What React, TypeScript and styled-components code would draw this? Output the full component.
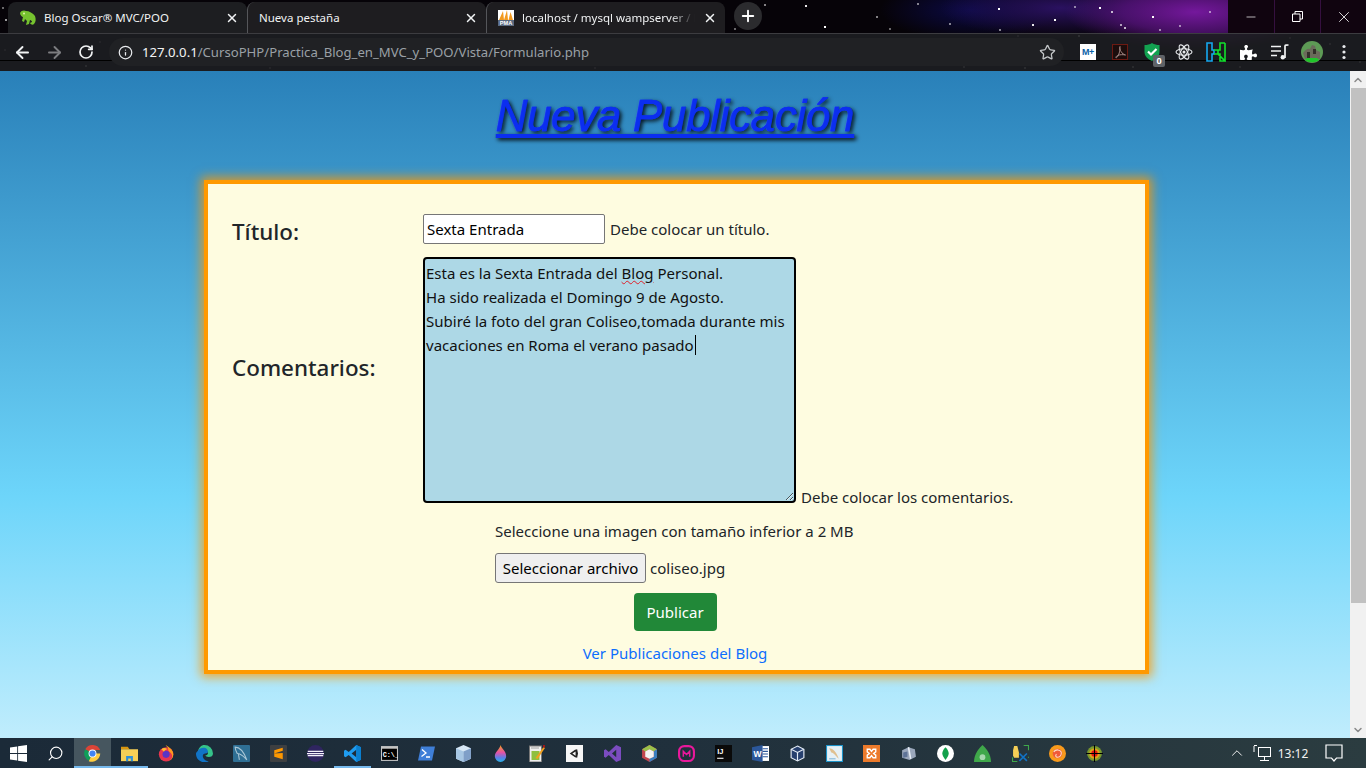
import React from 'react';
import styled, { createGlobalStyle } from 'styled-components';
import { ArrowLeft, ArrowRight, RotateCw, Info, Star, X, Plus, Minus, Search, ChevronUp, ChevronDown } from 'lucide-react';
import { FaPuzzlePiece } from 'react-icons/fa';

const GlobalStyle = createGlobalStyle`
  html, body { margin: 0; padding: 0; height: 100%; overflow: hidden; background: #111; }
  * { box-sizing: border-box; }
`;

const UI_FONT = `"Noto Sans", "Open Sans", "Liberation Sans", sans-serif`;

const STAR_LIST: [number, number, number][] = [
  [806, 6, 0.9], [825, 27, 1], [999, 9, 1], [1100, 8, 1], [1153, 17, 1], [1055, 20, 1], [1033, 25, 0.9], [1112, 12, 0.7],
  [1121, 25, 0.6], [1125, 28, 0.7], [918, 4, 0.5], [877, 17, 0.5], [765, 5, 0.5], [890, 29, 0.4], [950, 24, 0.5], [1075, 7, 0.5],
  [1180, 26, 0.5], [1210, 12, 0.5], [735, 29, 0.4], [1000, 30, 0.5], [1160, 30, 0.5], [6, 20, 0.6], [3, 8, 0.4],
  [1079, 36, 0.6], [1093, 45, 0.4], [1025, 68, 0.5], [1018, 36, 0.3], [1330, 44, 0.4], [1360, 62, 0.4], [86, 66, 0.5], [270, 68, 0.3],
  [595, 68, 0.3], [964, 67, 0.4], [1133, 67, 0.5], [1240, 67, 0.4], [5, 50, 0.3], [100, 42, 0.3], [1290, 38, 0.3],
];

const STARS = STAR_LIST.map(
  ([x, y, a]) => `radial-gradient(circle 1.4px at ${x}px ${y}px, rgba(255,255,255,${a}) 60%, transparent 100%)`
).join(', ');

const BrowserTop = styled.header`
  height: 71px;
  background:
    ${STARS},
    radial-gradient(ellipse 130px 38px at 1195px 12px, #74189c 0%, rgba(95, 20, 135, 0.7) 55%, transparent 100%),
    radial-gradient(ellipse 120px 30px at 1060px 8px, #2a1160 0%, transparent 100%),
    radial-gradient(ellipse 90px 30px at 970px 10px, #0b0a45 0%, transparent 100%),
    linear-gradient(#060308, #060308);
  background-size: 100% 100%;
`;

const TabStrip = styled.div`
  height: 33px;
  display: flex;
  align-items: flex-end;
  padding-left: 8px;
  position: relative;
`;

const Tab = styled.div<{ $active?: boolean }>`
  width: 239px;
  height: 31px;
  display: flex;
  align-items: center;
  gap: 8px;
  padding: 0 8px 0 12px;
  border-radius: 8px 8px 0 0;
  background: ${({ $active }) => ($active ? '#1d1e21' : 'rgba(40, 40, 42, 0.72)')};
  color: #f1f3f4;
  font: 11.5px ${UI_FONT};
  position: relative;
  & + & {
    border-left: 1px solid #55565a;
    padding-left: 11px;
  }
`;

const TabTitle = styled.span<{ $fade?: boolean }>`
  flex: 1;
  min-width: 0;
  white-space: nowrap;
  ${({ $fade }) => $fade && 'mask-image: linear-gradient(to right, #000 85%, transparent 100%);'}
`;

const NewTab = styled.button`
  width: 28px;
  height: 28px;
  margin: 0 0 2px 9px;
  align-self: center;
  border: 0;
  border-radius: 50%;
  background: #2b2b2e;
  color: #fff;
  display: flex;
  align-items: center;
  justify-content: center;
  padding: 0;
`;

const WinControls = styled.div`
  margin-left: auto;
  align-self: flex-start;
  height: 33px;
  display: flex;
  background: #10040f;
`;

const WinButton = styled.div`
  width: 46px;
  height: 33px;
  display: flex;
  align-items: center;
  justify-content: center;
  color: #fff;
  & + & { border-left: 1px solid #35103f; }
`;

const Toolbar = styled.nav`
  height: 38px;
  border-top: 1px solid #3c3c40;
  display: flex;
  align-items: flex-start;
  padding: 4px 0 0 6px;
  background: linear-gradient(to bottom, transparent 26px, #000 26px, #000 27px, transparent 27px), rgba(30, 31, 34, 0.88);
`;

const NavButton = styled.div<{ $dim?: boolean }>`
  width: 32px;
  height: 28px;
  display: flex;
  align-items: center;
  justify-content: center;
  color: ${({ $dim }) => ($dim ? '#7c7d80' : '#f1f3f4')};
`;

const Omnibox = styled.div`
  width: 955px;
  height: 28px;
  margin-left: 7px;
  border-radius: 14px;
  background: #202124;
  display: flex;
  align-items: center;
  padding: 0 8px 0 9px;
  color: #e8eaed;
`;

const Url = styled.span`
  margin-left: 9px;
  font: 13.15px ${UI_FONT};
  color: #9aa0a6;
  white-space: nowrap;
  flex: 1;
`;

const UrlHost = styled.span`
  color: #f1f3f4;
`;

const Extensions = styled.div`
  display: flex;
  margin-left: 8px;
`;

const ExtSlot = styled.div`
  width: 32px;
  height: 28px;
  display: flex;
  align-items: center;
  justify-content: center;
  position: relative;
  color: #fff;
`;

const Badge = styled.span`
  position: absolute;
  right: 3px;
  bottom: -1px;
  width: 12px;
  height: 12px;
  border-radius: 2px;
  background: #5f6368;
  color: #fff;
  font: bold 9px/12px ${UI_FONT};
  text-align: center;
`;

const MovistarMark = styled.span`
  width: 16px;
  height: 16px;
  background: #fff;
  color: #0b5fa8;
  font: 900 9px/16px "Liberation Sans", sans-serif;
  text-align: center;
  letter-spacing: -0.5px;
`;

const Page = styled.div`
  height: 667px;
  display: flex;
  overflow: hidden;
`;

const Content = styled.main`
  flex: 1;
  min-width: 0;
  background: linear-gradient(#2980b9, #6dd5fa, #ffffff);
  background-size: 100% 850px;
  background-repeat: no-repeat;
  padding-top: 19px;
`;

const Heading = styled.h1`
  margin: 0;
  text-align: center;
  height: 90px;
  font: italic 400 44px/52px "Liberation Sans", Arial, sans-serif;
  letter-spacing: -0.35px;
  color: #0b2ef0;
  -webkit-text-stroke: 0.6px #0b2ef0;
  text-decoration: underline;
  text-shadow: 2px 2px 4px #000;
`;

const Card = styled.section`
  width: 945px;
  margin-left: 204px;
  height: 494px;
  border: 4px solid #ff9900;
  background: #fefce0;
  box-shadow: 0 0 10px 3px rgba(255, 153, 0, 0.8);
  padding: 30px 27px 0 24px;
  font: 15.03px/24px ${UI_FONT};
  color: #212529;
`;

const FormGrid = styled.form`
  display: grid;
  grid-template-columns: 191px 1fr;
  row-gap: 13px;
`;

const FieldLabel = styled.label<{ $top: number }>`
  font-size: 22.4px;
  font-weight: 500;
  line-height: 30px;
  height: 30px;
  overflow: visible;
  transform: translateY(${({ $top }) => $top}px);
`;

const Field = styled.div<{ $end?: boolean }>`
  display: flex;
  align-items: ${({ $end }) => ($end ? 'flex-end' : 'center')};
  gap: 5px;
`;

const TextInput = styled.input`
  width: 182px;
  height: 30px;
  padding: 1px 3px;
  border: 1px solid #767676;
  border-radius: 2px;
  background: #fff;
  color: #000;
  font: 15.03px ${UI_FONT};
`;

const Comments = styled.div`
  width: 373px;
  height: 246px;
  padding: 2px 1px;
  border: 2px solid #000;
  border-radius: 4px;
  background: #add8e6;
  color: #111;
  resize: both;
  overflow: hidden;
`;

const Misspelled = styled.span`
  text-decoration: underline wavy #e0202a 1px;
`;

const Caret = styled.span`
  border-left: 1px solid #000;
  margin-left: 1px;
`;

const HintBottom = styled.span`
  line-height: 20px;
  margin-bottom: -4px;
`;

const UploadBlock = styled.div`
  padding-left: 263px;
  margin-top: 16px;
`;

const UploadRow = styled.div`
  display: flex;
  align-items: center;
  gap: 4px;
  margin-top: 10px;
`;

const FileButton = styled.button`
  width: 151px;
  height: 30px;
  padding: 0;
  border: 1px solid #767676;
  border-radius: 3px;
  background: #efefef;
  color: #000;
  font: 15.03px ${UI_FONT};
`;

const SubmitButton = styled.button`
  display: block;
  width: 83px;
  height: 38px;
  margin: 10px auto 0;
  border: 0;
  border-radius: 4px;
  background: #218838;
  color: #fff;
  font: 15.03px ${UI_FONT};
`;

const BackLink = styled.a`
  display: block;
  margin-top: 10px;
  text-align: center;
  color: #0d6efd;
  text-decoration: none;
`;

const Scrollbar = styled.aside`
  width: 16px;
  background: #f1f1f1;
  display: flex;
  flex-direction: column;
  align-items: center;
  color: #8a8a8a;
`;

const ScrollArrow = styled.div`
  height: 17px;
  display: flex;
  align-items: center;
  justify-content: center;
`;

const ScrollThumb = styled.div`
  width: 15px;
  height: 515px;
  background: #c1c1c1;
`;

const ScrollTrack = styled.div`
  flex: 1;
`;

const Taskbar = styled.footer`
  height: 30px;
  display: flex;
  background: linear-gradient(to right, #1b2a38, #20303c 50%, #2b3c40);
  color: #fff;
`;

const TaskItem = styled.div<{ $active?: boolean; $open?: boolean }>`
  width: 37.1px;
  height: 30px;
  flex: none;
  display: flex;
  align-items: center;
  justify-content: center;
  background: ${({ $active }) => ($active ? '#46565f' : 'transparent')};
  box-shadow: ${({ $open }) => ($open ? 'inset 0 -2px 0 #76b9ed' : 'none')};
  & > svg {
    width: 17px;
    height: 17px;
  }
`;

const Tray = styled.div`
  margin-left: auto;
  margin-right: 10px;
  display: flex;
  align-items: center;
  height: 30px;
`;

const TraySlot = styled.div<{ $w: number }>`
  width: ${({ $w }) => $w}px;
  display: flex;
  align-items: center;
  justify-content: center;
  font: 12px ${UI_FONT};
  color: #f2f2f2;
`;

/* ---------- drawings ---------- */

const Chameleon = () => (
  <svg width="16" height="16" viewBox="0 0 16 16">
    <path d="M0 3c1-3 5-3 6-2 3 0 7 2 9 5 1 3 1 6-1 8-1 1-3 1-4-1l2-1c0-1-1-2-2-2l-1 4-3 1 1-4-2-2-1 3-2-1 1-4C2 7 0 5 0 3z" fill="#76c32f" />
    <circle cx="4" cy="3.500" r="1" fill="#e2f5a8" />
  </svg>
);

const PmaIcon = () => (
  <svg width="16" height="16" viewBox="0 0 16 16">
    <rect width="16" height="16" fill="#fff" />
    <path d="M1 10 5 1l1 9zM6 10l3-10 1 10zM10.500 10l2-8 2.500 8z" fill="#f39a1f" />
    <rect y="10" width="16" height="6" fill="#5a6a80" />
    <text x="8" y="15.400" textAnchor="middle" fontSize="5.600" fontWeight="700" fontFamily="Liberation Sans" fill="#fff">PMA</text>
  </svg>
);

const PdfIcon = () => (
  <svg width="16" height="16" viewBox="0 0 16 16">
    <rect x=".5" y=".5" width="15" height="15" fill="#1c0d0c" stroke="#6c1a12" />
    <path d="M8 2.500c-1 1 .5 4 1 5 1 2 3 3 4.500 3.500-2-.5-6-.5-8 .5-1.500 1-2 2-1.500 2.300 1 .2 3-3 3.500-6 .3-2 .5-4.500.5-5.300z" fill="none" stroke="#a58a86" strokeWidth="1" />
  </svg>
);

const ShieldIcon = () => (
  <svg width="18" height="20" viewBox="0 0 18 20">
    <path d="M9 1c2 1.500 5 2 7.500 2v7c0 4-3.500 7.500-7.500 9-4-1.500-7.500-5-7.500-9V3C4 3 7 2.500 9 1z" fill="#12a150" />
    <path d="m5 9.500 3 3 5.500-5.500" fill="none" stroke="#fff" strokeWidth="2.200" />
  </svg>
);

const AtomIcon = () => (
  <svg width="18" height="18" viewBox="0 0 18 18" fill="none" stroke="#e8eaed" strokeWidth="1.100">
    <ellipse cx="9" cy="9" rx="8" ry="3.200" />
    <ellipse cx="9" cy="9" rx="8" ry="3.200" transform="rotate(60 9 9)" />
    <ellipse cx="9" cy="9" rx="8" ry="3.200" transform="rotate(120 9 9)" />
    <circle cx="9" cy="9" r="1.500" fill="#e8eaed" stroke="none" />
  </svg>
);

const NeonH = () => (
  <svg width="20" height="20" viewBox="0 0 20 20" fill="none" strokeWidth="1.600">
    <path d="M1 1h5v7h2v4H6v7H1z" stroke="#14a8f0" />
    <path d="M19 1h-5v7h-2M12 12h2v7h5zM19 1v18M8 8h4v4H8" stroke="#12e02c" />
  </svg>
);

const QueueIcon = () => (
  <svg width="18" height="16" viewBox="0 0 18 16" fill="none" stroke="#f1f3f4" strokeWidth="1.700">
    <path d="M0 2.500h10M0 7h10M0 11.500h6" />
    <path d="M14 14V2c0-1 1.500-1 3.500-1" />
    <circle cx="11.800" cy="13.200" r="2.200" fill="#f1f3f4" stroke="none" />
  </svg>
);

const AvatarIcon = () => (
  <svg width="22" height="22" viewBox="0 0 22 22">
    <circle cx="11" cy="11" r="11" fill="#5d9a55" />
    <path d="M2 12c3-4 5-5 7-4l2-4 3 1 1 4 4 2v7H4z" fill="#6a6b5a" />
    <path d="M6 11h3v6H6zm6-3h3v5h-3z" fill="#33302a" />
    <path d="M4 19c4 3 10 3 14 0l-2-2H6z" fill="#1fc72a" />
  </svg>
);

const MoreDots = () => (
  <svg width="4" height="16" viewBox="0 0 4 16" fill="#e8eaed">
    <circle cx="2" cy="2.500" r="1.600" />
    <circle cx="2" cy="8" r="1.600" />
    <circle cx="2" cy="13.500" r="1.600" />
  </svg>
);

const WinLogo = () => (
  <svg viewBox="0 0 16 16" fill="#fff">
    <path d="M0 2.300 6.800 1.400v6.200H0zM7.600 1.200 16 0v7.600H7.600zM0 8.400h6.800v6.200L0 13.700zM7.600 8.400H16V16l-8.400-1.200z" />
  </svg>
);

const ChromeLogo = () => (
  <svg viewBox="0 0 16 16">
    <path d="M8 8 1.100 4A8 8 0 0 1 15.300 4.700H8z" fill="#db4437" />
    <path d="M8 8 4.500 14.900 A8 8 0 0 1 1.100 4z" fill="#0f9d58" />
    <path d="M8 8h7.300A8 8 0 0 1 4.500 15.200z" fill="#ffcd40" />
    <circle cx="8" cy="8" r="3.700" fill="#fff" />
    <circle cx="8" cy="8" r="2.900" fill="#4285f4" />
  </svg>
);

const FolderIcon = () => (
  <svg viewBox="0 0 20 18">
    <path d="M0 1h8l2 3H0z" fill="#d9960f" />
    <rect y="4" width="20" height="14" fill="#f6cf56" />
    <path d="M6 18v-6h8v6h-2.500v-3h-3v3z" fill="#2d8fd8" />
  </svg>
);

const FirefoxIcon = () => (
  <svg viewBox="0 0 20 20">
    <circle cx="9.500" cy="11" r="8.500" fill="#e8354f" />
    <path d="M9 0c5 3 9 6 9 11s-4 8.500-8 8.500c5-1 7-4 6.500-7.500C16 9 12 8 12 5c0-2-2-3-3-5z" fill="#ff9a1e" />
    <circle cx="9.500" cy="11" r="4.200" fill="#5a35c4" />
    <path d="M4 5c2-2 5-2 7 0-2 0-3 1-4 3z" fill="#ffbb2e" />
  </svg>
);

const EdgeIcon = () => (
  <svg viewBox="0 0 20 20">
    <path d="M10 0a10 10 0 0 1 10 10c0 3-2 4-5 4-2 0-4-1-4-2 3 0 4-2 2-5-3-3-8-2-11 2C3 3 6 0 10 0z" fill="#35c38a" />
    <path d="M2 7c3-4 8-5 11-2 2 3 1 5-2 5-2 0-3 1-3 3 0 3 3 6 7 6a10 10 0 0 1-15-9c0-1 1-2 2-3z" fill="#1173c6" />
  </svg>
);

const MysqlBench = () => (
  <svg viewBox="0 0 16 16">
    <rect width="16" height="16" rx="1" fill="#2f6f94" />
    <path d="M2 2c4 0 8 4 11 12-3-3-5-6-9-6-1-2-2-4-2-6zM5 8l1 6" fill="none" stroke="#a9c6d6" strokeWidth="1" />
  </svg>
);

const SublimeIcon = () => (
  <svg viewBox="0 0 16 16">
    <rect width="16" height="16" rx="1" fill="#3d3f41" />
    <path d="M12 2.500v3L4 8V5zM4 8l8 2.500v3L4 11zM4 8l8-.5v3z" fill="#ff9800" />
  </svg>
);

const EclipseIcon = () => (
  <svg viewBox="0 0 16 16">
    <circle cx="8" cy="8" r="8" fill="#2f2560" />
    <path d="M.7 5.500h14.600v1.100H.7zM0 7.500h16v1.100H0zM.7 9.500h14.600v1.100H.7z" fill="#f2f0fa" />
  </svg>
);

const VsCodeIcon = () => (
  <svg viewBox="0 0 18 18">
    <path d="M13 0 18 2.400v13.200L13 18 5 10.500 1.700 13 0 12V6l1.700-1L5 7.500zM13 5 8 9l5 4z" fill="#1f9cf0" fillRule="evenodd" />
    <path d="M13 0 18 2.400v13.200L13 18z" fill="#0a7fd0" />
  </svg>
);

const CmdIcon = () => (
  <svg viewBox="0 0 16 14">
    <rect width="16" height="14" fill="#c4c4c4" />
    <rect x="1" y="2.500" width="14" height="10.500" fill="#000" />
    <text x="1.600" y="10" fontSize="6.400" fontWeight="700" fontFamily="Liberation Mono" fill="#fff">C:\_</text>
  </svg>
);

const PowerShellIcon = () => (
  <svg viewBox="0 0 17 14">
    <path d="M3 0h14l-3 14H0z" fill="#3f7fd8" />
    <path d="m4 3 4 3.500L3.500 10M8 10.500h4" fill="none" stroke="#fff" strokeWidth="1.300" />
  </svg>
);

const BoxIcon = () => (
  <svg viewBox="0 0 14 16">
    <path d="M7 0l7 3v10l-7 3-7-3V3z" fill="#d6e7f5" />
    <path d="M7 6v10l-7-3V3z" fill="#a7c7e4" />
    <path d="M7 6v10l7-3V3z" fill="#7f9fc8" />
  </svg>
);

const DropIcon = () => (
  <svg viewBox="0 0 12 18">
    <defs>
      <linearGradient id="dropFill" x1="0" y1="0" x2="0" y2="1">
        <stop offset="0" stopColor="#f6a21c" />
        <stop offset=".45" stopColor="#e351a8" />
        <stop offset=".75" stopColor="#5b7fe8" />
        <stop offset="1" stopColor="#27b4e6" />
      </linearGradient>
    </defs>
    <path d="M6 0c1 4 6 6 6 12a6 6 0 0 1-12 0C0 7 5 5 6 0z" fill="url(#dropFill)" />
  </svg>
);

const NotepadIcon = () => (
  <svg viewBox="0 0 16 17">
    <rect y="1" width="12" height="16" fill="#eee" stroke="#777" />
    <rect x="2" y="6" width="8" height="9" fill="#8fbf3f" />
    <path d="M2 3h8" stroke="#555" strokeDasharray="1 1" />
    <path d="M6 13 14 2l1.500 1L8 14z" fill="#f0a020" />
    <rect x="13.500" y="0" width="2" height="2.500" fill="#a01818" />
  </svg>
);

const UnityIcon = () => (
  <svg viewBox="0 0 16 16">
    <rect width="16" height="16" fill="#f6f6f6" />
    <path d="m3.500 8 5-3.500L10.500 4l.8 4-.8 4-2-.5zM6 8l3 2V6z" fill="#222" fillRule="evenodd" />
  </svg>
);

const VsIcon = () => (
  <svg viewBox="0 0 16 16">
    <path d="M11.500 0 16 2v12l-4.500 2L4.500 9.500 1.500 12 0 11V5l1.500-1 3 2.500zM11.500 4.500 7.500 8l4 3.500z" fill="#7b4cc0" fillRule="evenodd" />
  </svg>
);

const CubeIcon = () => (
  <svg viewBox="0 0 14 16">
    <path d="M7 0l7 4v8l-7 4-7-4V4z" fill="#c2464e" />
    <path d="M7 0l7 4-3 2-4-2-4 2-3-2z" fill="#9ac24a" />
    <path d="M14 4v8l-7 4v-3l4-2V6z" fill="#3a7fc0" />
    <path d="M7 4l4 2v5l-4 2-4-2V6z" fill="#f3f3f3" />
  </svg>
);

const PinkIcon = () => (
  <svg viewBox="0 0 16 16" fill="none" stroke="#e9189b" strokeWidth="2">
    <rect x="1" y="1" width="14" height="14" rx="5" />
    <path d="M5 11V6l3 3 3-3v5" strokeWidth="1.400" />
  </svg>
);

const IdeaIcon = () => (
  <svg viewBox="0 0 16 16">
    <rect width="16" height="16" fill="#0a0a0a" />
    <text x="2" y="8.500" fontSize="7" fontWeight="700" fontFamily="Liberation Sans" fill="#fff">IJ</text>
    <rect x="2" y="12" width="6" height="1" fill="#fff" />
  </svg>
);

const WordIcon = () => (
  <svg viewBox="0 0 16 16">
    <rect x="6" y="1" width="10" height="14" fill="#fff" />
    <path d="M10 3.500h5M10 6h5M10 8.500h5M10 11h5" stroke="#2b579a" />
    <path d="M0 2 10 0v16L0 14z" fill="#2b579a" />
    <text x="1.400" y="11" fontSize="8" fontWeight="700" fontFamily="Liberation Sans" fill="#fff">W</text>
  </svg>
);

const VBoxIcon = () => (
  <svg viewBox="0 0 14 16" fill="#27406e" stroke="#e4ecf6" strokeWidth="1.100">
    <path d="M7 1l6 3v8l-6 3-6-3V4z" />
    <path d="M1 4l6 3 6-3M7 7v8" fill="none" />
  </svg>
);

const WorkbenchDoc = () => (
  <svg viewBox="0 0 16 16">
    <rect x=".5" y=".5" width="15" height="15" fill="#e7f1f6" stroke="#1c93c9" />
    <path d="M3 3c4 0 7 4 9 10-3-3-5-6-7-6z" fill="#e0c090" />
    <path d="M3 13h6" stroke="#7fb6d8" />
  </svg>
);

const XamppIcon = () => (
  <svg viewBox="0 0 16 16">
    <rect width="16" height="16" fill="#ec7a2b" />
    <path d="M4 4h2.500L8 6l1.500-2H12v2.500L10 8l2 1.500V12H9.500L8 10l-1.500 2H4V9.500L6 8 4 6.500z" fill="none" stroke="#fff" strokeWidth="1.300" />
  </svg>
);

const AzureIcon = () => (
  <svg viewBox="0 0 16 14">
    <path d="M2 4l6-3 6 2 1 7-6 3-7-2z" fill="#9aa7bb" />
    <path d="M8 1l2 11" stroke="#e8eef5" strokeWidth="1.500" />
    <path d="M3 6l4-1v5l-4 1z" fill="#5e7396" />
  </svg>
);

const MongoIcon = () => (
  <svg viewBox="0 0 16 16">
    <circle cx="8" cy="8" r="8" fill="#fff" />
    <path d="M8 2c2 2 3 4 3 6s-1.500 4-3 6c-1.500-2-3-4-3-6s1-4 3-6z" fill="#12a14b" />
  </svg>
);

const GreenHouse = () => (
  <svg viewBox="0 0 16 16">
    <path d="M8 0c3 3 8 8 8 16H0C0 8 5 3 8 0z" fill="#3fa84a" />
    <circle cx="8" cy="11.500" r="2.700" fill="#a7d8ae" />
  </svg>
);

const ToolsIcon = () => (
  <svg viewBox="0 0 16 16">
    <path d="M1 10V5l1-4h3l1.500 6V12H2z" fill="#f6cf56" />
    <path d="M11 .5h4.500V5M.5 11.500v4H5M15.500 11v1" fill="none" stroke="#3fa84a" />
    <path d="m7 8 7 7M14 8l-7 7" stroke="#1173c6" strokeWidth="1.500" />
  </svg>
);

const OrangeBall = () => (
  <svg viewBox="0 0 16 16">
    <circle cx="8" cy="8" r="8" fill="#f89a1c" />
    <circle cx="8" cy="8" r="4.500" fill="#f05a3a" />
    <path d="M4.500 6.500c2-3 6-2 7 0 .5 3-1 5-3.500 5-2 0-2-2-1-3" fill="none" stroke="#fde2c8" />
  </svg>
);

const TargetIcon = () => (
  <svg viewBox="0 0 16 16">
    <circle cx="8" cy="8" r="7" fill="#7a9a2c" />
    <circle cx="8" cy="8" r="5" fill="#e0a016" />
    <circle cx="8" cy="8" r="3" fill="#e01414" />
    <path d="M8 0v16M0 8h16" stroke="#000" />
  </svg>
);

const NetworkIcon = () => (
  <svg width="18" height="16" viewBox="0 0 18 16" fill="none" stroke="#fff">
    <rect x="5.500" y="2.500" width="12" height="9" />
    <path d="M1 1v6M1 .5h3M11.500 11.500V15M7 15.500h9" />
  </svg>
);

const NotifyIcon = () => (
  <svg width="18" height="18" viewBox="0 0 18 18" fill="none" stroke="#fff" strokeWidth="1.200">
    <path d="M1 1h16v13h-5.500L9 17l-2.500-3H1z" />
  </svg>
);

const TASK_ICONS: { icon: React.ReactNode; active?: boolean; open?: boolean }[] = [
  { icon: <WinLogo /> },
  { icon: <Search strokeWidth={1.6} style={{ transform: 'scaleX(-1)' }} /> },
  { icon: <ChromeLogo />, active: true, open: true },
  { icon: <FolderIcon />, open: true },
  { icon: <FirefoxIcon /> },
  { icon: <EdgeIcon /> },
  { icon: <MysqlBench /> },
  { icon: <SublimeIcon /> },
  { icon: <EclipseIcon /> },
  { icon: <VsCodeIcon />, open: true },
  { icon: <CmdIcon /> },
  { icon: <PowerShellIcon /> },
  { icon: <BoxIcon /> },
  { icon: <DropIcon /> },
  { icon: <NotepadIcon /> },
  { icon: <UnityIcon /> },
  { icon: <VsIcon /> },
  { icon: <CubeIcon /> },
  { icon: <PinkIcon /> },
  { icon: <IdeaIcon /> },
  { icon: <WordIcon /> },
  { icon: <VBoxIcon /> },
  { icon: <WorkbenchDoc /> },
  { icon: <XamppIcon /> },
  { icon: <AzureIcon /> },
  { icon: <MongoIcon /> },
  { icon: <GreenHouse /> },
  { icon: <ToolsIcon /> },
  { icon: <OrangeBall /> },
  { icon: <TargetIcon /> },
];

const App = () => (
  <>
    <GlobalStyle />
    <BrowserTop>
      <TabStrip>
        <Tab $active>
          <Chameleon />
          <TabTitle>Blog Oscar® MVC/POO</TabTitle>
          <X size={14} strokeWidth={2.5} />
        </Tab>
        <Tab>
          <TabTitle>Nueva pestaña</TabTitle>
          <X size={14} strokeWidth={2.5} />
        </Tab>
        <Tab>
          <PmaIcon />
          <TabTitle $fade>localhost / mysql wampserver / b</TabTitle>
          <X size={14} strokeWidth={2.5} />
        </Tab>
        <NewTab>
          <Plus size={18} strokeWidth={2.5} />
        </NewTab>
        <WinControls>
          <WinButton><Minus size={14} strokeWidth={1.2} /></WinButton>
          <WinButton>
            <svg width="11" height="11" viewBox="0 0 11 11" fill="none" stroke="#fff">
              <path d="M.5 3h7.500v7.500H.5zM3 3V.5h7.500V8H8" />
            </svg>
          </WinButton>
          <WinButton><X size={18} strokeWidth={1.1} /></WinButton>
        </WinControls>
      </TabStrip>
      <Toolbar>
        <NavButton><ArrowLeft size={19} strokeWidth={2.4} /></NavButton>
        <NavButton $dim><ArrowRight size={19} strokeWidth={2.4} /></NavButton>
        <NavButton><RotateCw size={16} strokeWidth={2.6} /></NavButton>
        <Omnibox>
          <Info size={15} strokeWidth={2} />
          <Url><UrlHost>127.0.0.1</UrlHost>/CursoPHP/Practica_Blog_en_MVC_y_POO/Vista/Formulario.php</Url>
          <Star size={17} strokeWidth={1.8} color="#c4c7c9" />
        </Omnibox>
        <Extensions>
          <ExtSlot><MovistarMark>M+</MovistarMark></ExtSlot>
          <ExtSlot><PdfIcon /></ExtSlot>
          <ExtSlot><ShieldIcon /><Badge>0</Badge></ExtSlot>
          <ExtSlot><AtomIcon /></ExtSlot>
          <ExtSlot><NeonH /></ExtSlot>
          <ExtSlot><FaPuzzlePiece size={17} /></ExtSlot>
          <ExtSlot><QueueIcon /></ExtSlot>
          <ExtSlot><AvatarIcon /></ExtSlot>
          <ExtSlot><MoreDots /></ExtSlot>
        </Extensions>
      </Toolbar>
    </BrowserTop>

    <Page>
      <Content>
        <Heading>Nueva Publicación</Heading>
        <Card>
          <FormGrid onSubmit={(e) => e.preventDefault()}>
            <FieldLabel $top={3}>Título:</FieldLabel>
            <Field>
              <TextInput type="text" value="Sexta Entrada" readOnly />
              <span>Debe colocar un título.</span>
            </Field>
            <FieldLabel $top={96}>Comentarios:</FieldLabel>
            <Field $end>
              <Comments>
                Esta es la Sexta Entrada del <Misspelled>Blog</Misspelled> Personal.<br />
                Ha sido realizada el Domingo 9 de Agosto.<br />
                Subiré la foto del gran Coliseo,tomada durante mis vacaciones en Roma el verano pasado<Caret />
              </Comments>
              <HintBottom>Debe colocar los comentarios.</HintBottom>
            </Field>
          </FormGrid>
          <UploadBlock>
            <div>Seleccione una imagen con tamaño inferior a 2 MB</div>
            <UploadRow>
              <FileButton type="button">Seleccionar archivo</FileButton>
              <span>coliseo.jpg</span>
            </UploadRow>
          </UploadBlock>
          <SubmitButton type="submit">Publicar</SubmitButton>
          <BackLink href="#">Ver Publicaciones del Blog</BackLink>
        </Card>
      </Content>
      <Scrollbar>
        <ScrollArrow><ChevronUp size={12} strokeWidth={3} /></ScrollArrow>
        <ScrollThumb />
        <ScrollTrack />
        <ScrollArrow><ChevronDown size={12} strokeWidth={3} /></ScrollArrow>
      </Scrollbar>
    </Page>

    <Taskbar>
      {TASK_ICONS.map((item, i) => (
        <TaskItem key={i} $active={item.active} $open={item.open}>{item.icon}</TaskItem>
      ))}
      <Tray>
        <TraySlot $w={26}><ChevronUp size={18} strokeWidth={1.3} /></TraySlot>
        <TraySlot $w={24}><NetworkIcon /></TraySlot>
        <TraySlot $w={38}>13:12</TraySlot>
        <TraySlot $w={44}><NotifyIcon /></TraySlot>
      </Tray>
    </Taskbar>
  </>
);

export default App;
